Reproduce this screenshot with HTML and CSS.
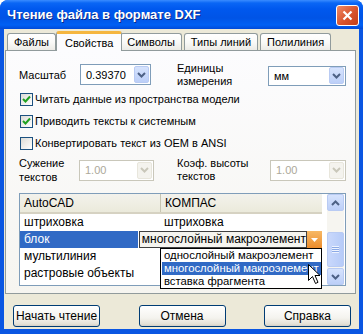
FILE: index.html
```html
<!DOCTYPE html>
<html lang="ru">
<head>
  <meta charset="UTF-8">
  <title>Чтение файла в формате DXF</title>
  <link rel="stylesheet" href="styles.css">
</head>
<body>
  <div class="window">
    <div class="titlebar">
      <span class="title">Чтение файла в формате DXF</span>
      <span class="close">
        <svg width="11" height="11" viewBox="0 0 11 11"><path d="M1.5 1.5 L9.5 9.5 M9.5 1.5 L1.5 9.5" stroke="#fff" stroke-width="2.2"/></svg>
      </span>
    </div>
    <div class="client">
      <div class="tabs">
        <div class="tab">Файлы</div>
        <div class="tab active">Свойства</div>
        <div class="tab">Символы</div>
        <div class="tab">Типы линий</div>
        <div class="tab">Полилиния</div>
      </div>
      <div class="panel">
        <div class="field-row scale-row">
          <span class="lbl">Масштаб</span>
          <div class="combo"><span class="val">0.39370</span><span class="drop"><svg width="9" height="6" viewBox="0 0 9 6"><path d="M1 1 L4.5 4.5 L8 1" fill="none" stroke="#4d6185" stroke-width="2"/></svg></span></div>
          <span class="lbl two">Единицы<br>измерения</span>
          <div class="combo short"><span class="val">мм</span><span class="drop"><svg width="9" height="6" viewBox="0 0 9 6"><path d="M1 1 L4.5 4.5 L8 1" fill="none" stroke="#4d6185" stroke-width="2"/></svg></span></div>
        </div>
        <label class="check"><span class="box"><svg width="9" height="8" viewBox="0 0 9 8"><path d="M1 4 L3.5 6.5 L8 1.5" fill="none" stroke="#21a121" stroke-width="2"/></svg></span>Читать данные из пространства модели</label>
        <label class="check"><span class="box"><svg width="9" height="8" viewBox="0 0 9 8"><path d="M1 4 L3.5 6.5 L8 1.5" fill="none" stroke="#21a121" stroke-width="2"/></svg></span>Приводить тексты к системным</label>
        <label class="check"><span class="box"></span>Конвертировать текст из OEM в ANSI</label>
        <div class="field-row text-row">
          <span class="lbl two">Сужение<br>текстов</span>
          <div class="combo disabled"><span class="val">1.00</span><span class="drop"><svg width="9" height="6" viewBox="0 0 9 6"><path d="M1 1 L4.5 4.5 L8 1" fill="none" stroke="#c9c7ba" stroke-width="2"/></svg></span></div>
          <span class="lbl two">Коэф. высоты<br>текстов</span>
          <div class="combo disabled"><span class="val">1.00</span><span class="drop"><svg width="9" height="6" viewBox="0 0 9 6"><path d="M1 1 L4.5 4.5 L8 1" fill="none" stroke="#c9c7ba" stroke-width="2"/></svg></span></div>
        </div>
        <div class="list">
          <div class="list-body">
            <div class="list-head"><span class="c1">AutoCAD</span><span class="c2">КОМПАС</span></div>
            <div class="list-row"><span class="c1">штриховка</span><span class="c2">штриховка</span></div>
            <div class="list-row sel">
              <span class="c1">блок</span>
              <span class="c2 edit"><span class="cell-text">многослойный макроэлемент</span><span class="cell-drop"><svg width="7" height="4" viewBox="0 0 7 4"><path d="M0 0 H7 L3.5 4 Z" fill="#fff"/></svg></span></span>
            </div>
            <div class="list-row"><span class="c1">мультилиния</span><span class="c2"></span></div>
            <div class="list-row"><span class="c1">растровые объекты</span><span class="c2"></span></div>
            <div class="popup">
              <div class="opt">однослойный макроэлемент</div>
              <div class="opt hl">многослойный макроэлемент</div>
              <div class="opt">вставка фрагмента</div>
            </div>
            <svg class="cursor" width="13" height="21" viewBox="0 0 13 21"><path d="M0.5 0.5 V16.5 L4.5 12.5 L7.5 19.5 L10 18.3 L7 11.5 H12 Z" fill="#fff" stroke="#000" stroke-width="1"/></svg>
          </div>
          <div class="vscroll">
            <span class="sb-btn"><svg width="9" height="6" viewBox="0 0 9 6"><path d="M1 5 L4.5 1.5 L8 5" fill="none" stroke="#4d6185" stroke-width="2"/></svg></span>
            <span class="sb-track"><span class="sb-thumb"><span class="grip"></span></span></span>
            <span class="sb-btn"><svg width="9" height="6" viewBox="0 0 9 6"><path d="M1 1 L4.5 4.5 L8 1" fill="none" stroke="#4d6185" stroke-width="2"/></svg></span>
          </div>
        </div>
      </div>
      <div class="buttons">
        <button type="button">Начать чтение</button>
        <button type="button">Отмена</button>
        <button type="button">Справка</button>
      </div>
    </div>
  </div>
</body>
</html>
```

FILE: styles.css
```css
body {
  margin: 0;
  font-family: "Liberation Sans", Arial, sans-serif;
  font-size: 11px;
  color: #000;
  background: #fff;
}

.window {
  width: 363px;
  height: 334px;
  display: flex;
  flex-direction: column;
  background: #0a56e2;
  border-radius: 8px 8px 0 0;
  overflow: hidden;
  white-space: nowrap;
}

.titlebar {
  height: 29px;
  flex: none;
  display: flex;
  align-items: center;
  justify-content: space-between;
  background: linear-gradient(to bottom, #3a8cff 0, #0a66f5 3px, #0058ee 9px, #0054e6 18px, #0060f4 25px, #004ad8 29px);
}

.title {
  padding-left: 7px;
  color: #fff;
  font-weight: bold;
  font-size: 13px;
  text-shadow: 1px 1px #0b2a8a;
}

.close {
  width: 21px;
  height: 19px;
  margin-right: 4px;
  margin-top: 2px;
  border: 1px solid #fff;
  border-radius: 3px;
  background: linear-gradient(135deg, #f08a66, #d8532c 55%, #c23e18);
  display: flex;
  align-items: center;
  justify-content: center;
}

.client {
  flex: 1;
  margin: 0 4px 5px;
  background: #ece9d8;
  display: flex;
  flex-direction: column;
}

.tabs {
  height: 21px;
  display: flex;
  align-items: flex-end;
  padding-left: 3px;
  position: relative;
  z-index: 1;
}

.tab {
  height: 16px;
  line-height: 17px;
  padding: 0 6px;
  margin-right: 2px;
  border: 1px solid #919b9c;
  border-bottom: none;
  border-radius: 3px 3px 0 0;
  background: linear-gradient(#fff, #fafaf8 50%, #ecebe6);
}

.tab.active {
  height: 17px;
  line-height: 19px;
  margin: 0 0 -1px -2px;
  padding: 0 8px;
  border-top: 3px solid #f5b640;
  background: #fcfcfe;
  position: relative;
}

.tab.active + .tab {
  margin-left: -2px;
}

.panel {
  height: 244px;
  width: 351px;
  box-sizing: border-box;
  margin-left: 1px;
  padding: 10px 9px 0 13px;
  border: 1px solid #919b9c;
  background: linear-gradient(#fcfcfe, #f6f5f0);
  position: relative;
}

.field-row {
  display: grid;
  align-items: center;
}

.scale-row {
  height: 27px;
  grid-template-columns: 61px 71px 117px 78px;
}

.text-row {
  height: 28px;
  margin-top: 2px;
  grid-template-columns: 60px 75px 116px 76px;
}

.lbl.two {
  line-height: 13px;
  margin-left: 23px;
}

.text-row .lbl.two:first-child {
  margin-left: 0;
  line-height: 14px;
}

.scale-row .lbl.two {
  margin-left: 26px;
}

.combo {
  height: 21px;
  box-sizing: border-box;
  border: 1px solid #7f9db9;
  background: #fff;
  display: flex;
  align-items: center;
  justify-content: space-between;
  padding: 0 1px 0 5px;
}

.combo.short {
  height: 20px;
  margin-top: 2px;
}

.drop {
  width: 15px;
  height: 17px;
  box-sizing: border-box;
  border: 1px solid #b9cbf3;
  border-radius: 2px;
  background: linear-gradient(#d6e3fd, #bccff8);
  display: flex;
  align-items: center;
  justify-content: center;
}

.combo.disabled {
  border-color: #c9c7ba;
  color: #aca899;
}

.combo.disabled .drop {
  border-color: #e8e6dc;
  background: #f4f3ee;
}

.check {
  height: 22px;
  display: flex;
  align-items: center;
}

.box {
  width: 13px;
  height: 13px;
  box-sizing: border-box;
  margin: 0 2px 0 1px;
  border: 1px solid #1c5180;
  background: linear-gradient(135deg, #dcdcd7, #fff);
  display: flex;
  align-items: center;
  justify-content: center;
}

.list {
  margin-top: 9px;
  width: 327px;
  height: 93px;
  box-sizing: border-box;
  border: 1px solid #7f9db9;
  background: #fff;
  display: flex;
  font-size: 12px;
}

.list-body {
  flex: 1;
  position: relative;
}

.list-head,
.list-row {
  display: flex;
  width: 302px;
}

.list-head {
  height: 20px;
  line-height: 18px;
  box-sizing: border-box;
  border-bottom: 2px solid #d6d2c2;
  background: linear-gradient(#f3f2ec, #ebeadb);
}

.list-head .c2 {
  border-left: 1px solid #c7c5b2;
}

.c1 {
  width: 140px;
  padding-left: 4px;
  box-sizing: border-box;
}

.c2 {
  flex: 1;
  padding-left: 4px;
}

.list-row {
  height: 17px;
  line-height: 17px;
}

.list-row.sel .c1 {
  background: #316ac5;
  color: #fff;
}

.c2.edit {
  display: flex;
  padding-left: 1px;
}

.cell-text {
  flex: 1;
  min-width: 0;
  overflow: hidden;
  padding-left: 2px;
  border: 1px solid #404040;
  background: #f5f4ef;
  line-height: 15px;
}

.cell-drop {
  width: 15px;
  background: linear-gradient(#f7b865, #ec8c2c);
  display: flex;
  align-items: center;
  justify-content: center;
}

.popup {
  position: absolute;
  left: 140px;
  top: 54px;
  width: 162px;
  box-sizing: border-box;
  border: 1px solid #000;
  background: #fff;
  padding-left: 1px;
  font-size: 11.3px;
}

.opt {
  height: 13px;
  line-height: 13px;
  padding-left: 2px;
}

.opt.hl {
  background: #316ac5;
  color: #fff;
}

.cursor {
  position: absolute;
  left: 288px;
  top: 70px;
}

.vscroll {
  width: 17px;
  margin-right: 1px;
  display: flex;
  flex-direction: column;
  background: #f6f5f0;
}

.sb-btn {
  height: 17px;
  box-sizing: border-box;
  border: 1px solid #b9cbf3;
  border-radius: 2px;
  background: linear-gradient(#d6e3fd, #bccff8);
  display: flex;
  align-items: center;
  justify-content: center;
}

.sb-track {
  flex: 1;
  display: flex;
  flex-direction: column;
  justify-content: flex-end;
  padding-bottom: 1px;
}

.sb-thumb {
  height: 35px;
  box-sizing: border-box;
  border: 1px solid #b9cbf3;
  border-radius: 2px;
  background: linear-gradient(to right, #c9d8fc, #b6cbf8);
  display: flex;
  align-items: center;
  justify-content: center;
}

.grip {
  width: 7px;
  height: 7px;
  background: repeating-linear-gradient(#eef3fe 0 1px, #8caae6 1px 2px);
}

.buttons {
  display: flex;
  justify-content: space-between;
  padding: 11px 8px 0 9px;
}

button {
  width: 87px;
  height: 22px;
  border: 1px solid #003c74;
  border-radius: 3px;
  background: linear-gradient(#fff, #f4f3ee 60%, #e4e1d7 90%, #d6d0c5);
  font-family: "Liberation Sans", Arial, sans-serif;
  font-size: 12px;
  color: #000;
  padding: 0;
}
```
